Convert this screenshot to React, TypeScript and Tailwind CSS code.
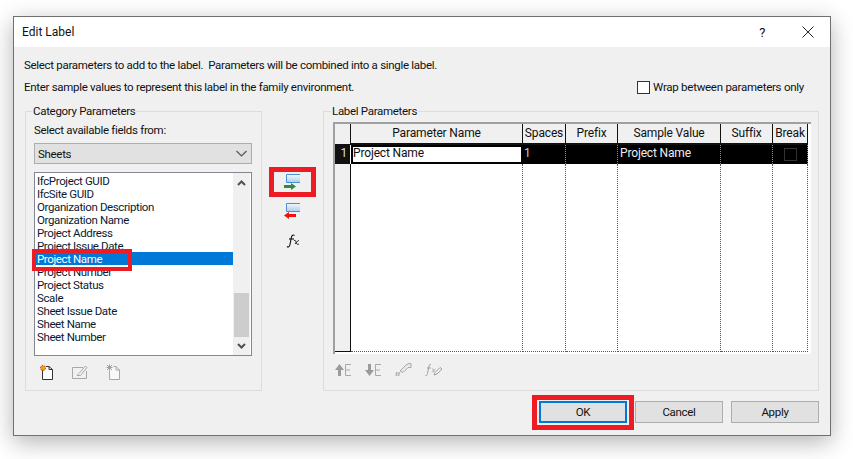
import React from "react";

const fields = [
  "IfcProject GUID",
  "IfcSite GUID",
  "Organization Description",
  "Organization Name",
  "Project Address",
  "Project Issue Date",
  "Project Name",
  "Project Number",
  "Project Status",
  "Scale",
  "Sheet Issue Date",
  "Sheet Name",
  "Sheet Number",
];

const headers = ["Parameter Name", "Spaces", "Prefix", "Sample Value", "Suffix", "Break"];

function ArrowIcon({ color, back }: { color: string; back?: boolean }) {
  return (
    <svg width="20" height="16" viewBox="0 0 20 16" className="block">
      <defs>
        <linearGradient id={`bar-${color}`} x1="0" y1="0" x2="0" y2="1">
          <stop offset="0" stopColor="#f4f9fd" />
          <stop offset="1" stopColor="#a9cdee" />
        </linearGradient>
      </defs>
      <path d="M17 .5H3.500v8H17" fill={`url(#bar-${color})`} stroke="#4a90d0" />
      {back ? (
        <path d="M13 11H6V9l-5 3.500 5 3.500v-2h7z" fill={color} />
      ) : (
        <path d="M1 11h7V9l5 3.500-5 3.500v-2H1z" fill={color} />
      )}
    </svg>
  );
}

function FxIcon() {
  return (
    <svg width="14" height="14" viewBox="0 0 14 14" fill="none" stroke="#111" strokeWidth="1.100" className="block">
      <path d="M8.500 1.500C7 .5 6 1.200 5.500 3L4 10.500C3.500 13 2 13.500 1 12.500" />
      <path d="M3 5h5" />
      <path d="M8 6.500c1.500-.5 2 .5 2.500 3 .5 1 1 1 2.500.5M13 6.500c-1 0-2 1-4 3.500" strokeWidth=".9" />
    </svg>
  );
}

function NewIcon() {
  return (
    <svg width="16" height="17" viewBox="0 0 16 17" fill="none">
      <path d="M3.500 5.500V15.500H13.500V5.500L10 2.500H7" stroke="#333" fill="#fff" />
      <path d="M10 2.500V5.500H13.500" stroke="#333" />
      <circle cx="4" cy="4" r="2.500" fill="#f5a400" stroke="#e03010" strokeDasharray="1.500 1" />
    </svg>
  );
}

function EditIcon() {
  return (
    <svg width="17" height="15" viewBox="0 0 17 15" fill="none">
      <path d="M14.500 6V13.500H.5V2.500H11" stroke="#a8a8a8" />
      <path d="M5 10.500h3.500L15 2.500 13.500 1 7 8.500z" stroke="#a8a8a8" fill="#f4f4f4" />
    </svg>
  );
}

function DeleteIcon() {
  return (
    <svg width="16" height="17" viewBox="0 0 16 17" fill="none">
      <path d="M3.500 6.500V15.500H13.500V6L10 2.500H7.500" stroke="#a8a8a8" fill="#f8f8f8" />
      <path d="M10 2.500V6H13.500" stroke="#a8a8a8" />
      <path d="M1 1l5 5M6 1L1 6M3.500 .5v6M.5 3.500h6" stroke="#a0a0a0" />
    </svg>
  );
}

function MoveIcon({ down }: { down?: boolean }) {
  return (
    <svg width="17" height="14" viewBox="0 0 17 14" fill="none">
      {down ? <path d="M3 1h3v6h3l-4.500 6L0 7h3z" fill="#9a9a9a" /> : <path d="M4.500 1L9 7H6v6H3V7H0z" fill="#9a9a9a" />}
      <path d="M16 1.500H10.500V12.500H16M10.500 7H15" stroke="#a8a8a8" />
    </svg>
  );
}

function RenameIcon() {
  return (
    <svg width="17" height="15" viewBox="0 0 17 15" fill="none" stroke="#a8a8a8">
      <path d="M1 14l1-4M3.500 14l1-4M.5 11h4.500M.5 13h4" strokeWidth=".8" />
      <path d="M5 9l6-6 3-1.500h2v4h-3l-5 5z" fill="#eaeaea" />
    </svg>
  );
}

function FxEditIcon() {
  return (
    <svg width="18" height="14" viewBox="0 0 18 14" fill="none" stroke="#a0a0a0">
      <path d="M6 1.500C5 1 4.500 1.500 4 3L2.500 10.500C2 12.500 1.500 13 .5 12.500M2 5h4" />
      <path d="M7 6c1.500-.5 1.500 1 2 3M10.500 6C9 7 8 8 7 9.500" strokeWidth=".8" />
      <path d="M9 12l1-2.500 5-5 2 1.500-5 5z" fill="#f2f2f2" />
    </svg>
  );
}

function Chevron() {
  return (
    <svg width="11" height="7" viewBox="0 0 11 7" fill="none" stroke="#555" strokeWidth="1.200">
      <path d="M.5 1L5.500 6l5-5" />
    </svg>
  );
}

function ScrollArrow({ down }: { down?: boolean }) {
  return (
    <svg width="9" height="6" viewBox="0 0 9 6" fill="none" stroke="#505050" strokeWidth="2">
      <path d={down ? "M1 1l3.500 3.500L8 1" : "M1 5l3.500-3.500L8 5"} />
    </svg>
  );
}

function Button({ label, active }: { label: string; active?: boolean }) {
  return (
    <button
      className={
        active
          ? "h-[22px] w-[88px] border-2 border-[#0078d7] bg-[#e1e1e1] text-center text-[#111]"
          : "h-[22px] w-[88px] border border-[#adadad] bg-[#e1e1e1] text-center text-[#111]"
      }
    >
      {label}
    </button>
  );
}

export default function App() {
  return (
    <div className="h-[459px] w-[853px] overflow-hidden bg-white pl-[13px] pt-[16px] font-['Roboto',sans-serif] text-[11.5px] leading-[13px] tracking-[-0.3px] text-[#111]">
      <div className="relative h-[420px] w-[818px] border border-[#707070] bg-[#f0f0f0] shadow-[0_6px_22px_rgba(0,0,0,0.3)]">
        {/* title bar */}
        <div className="flex h-[30px] items-center bg-white pl-[8px] pr-[16px]">
          <span className="flex-1 text-[12px] tracking-normal">Edit Label</span>
          <span className="mr-[37px] text-[13px]">?</span>
          <svg width="12" height="12" viewBox="0 0 12 12" stroke="#222" fill="none">
            <path d="M.5 .5l11 11M11.500 .5l-11 11" />
          </svg>
        </div>

        <div className="pl-[10px] pr-[26px] pt-[7px]">
          <div className="flex h-[22px] items-center">
            Select parameters to add to the label.&nbsp; Parameters will be combined into a single label.
          </div>
          <div className="flex h-[22px] items-center justify-between">
            <span>Enter sample values to represent this label in the family environment.</span>
            <label className="flex items-center gap-[3px] tracking-[-0.26px]">
              <span className="h-[13px] w-[13px] border border-[#333] bg-white" />
              Wrap between parameters only
            </label>
          </div>
        </div>

        <div className="flex pl-[11px] pt-[5px]">
          {/* left group */}
          <fieldset className="h-[288px] w-[237px] border border-[#dcdcdc] pl-[8px]">
            <legend className="ml-[-2px] px-[1px] leading-[16px]">Category Parameters</legend>
            <div className="mt-[3px] h-[16px] leading-[16px]">Select available fields from:</div>
            <div className="mt-[5px] flex h-[21px] w-[218px] items-center justify-between border border-[#adadad] bg-[#e1e1e1] pl-[3px] pr-[4px]">
              <span className="pt-[1px]">Sheets</span>
              <Chevron />
            </div>
            <div className="mt-[8px] flex h-[184px] w-[218px] border border-[#828790] bg-white">
              <ul className="w-[198px] pt-[1px] tracking-[-0.38px]">
                {fields.map((f) => (
                  <li
                    key={f}
                    className={
                      f === "Project Name"
                        ? "h-[13px] bg-[#0078d7] pl-[2px] leading-[15px] text-white"
                        : "h-[13px] pl-[2px] leading-[15px] text-[#0a1a33]"
                    }
                  >
                    {f}
                  </li>
                ))}
              </ul>
              <div className="flex w-[17px] flex-col items-center bg-[#f0f0f0]">
                <div className="flex h-[17px] items-center justify-center pt-[3px]">
                  <ScrollArrow />
                </div>
                <div className="mt-[103px] h-[44px] w-[15px] bg-[#cdcdcd]" />
                <div className="flex flex-1 items-center justify-center pb-[1px]">
                  <ScrollArrow down />
                </div>
              </div>
            </div>
            <div className="mt-[8px] flex items-center gap-[17px] pl-[5px]">
              <NewIcon />
              <EditIcon />
              <DeleteIcon />
            </div>
          </fieldset>

          {/* add / remove buttons */}
          <div className="flex w-[61px] flex-col items-center pl-[1px] pt-[71px]">
            <ArrowIcon color="#2e8b45" />
            <div className="mt-[13px]">
              <ArrowIcon color="#f01010" back />
            </div>
            <div className="mt-[15px]">
              <FxIcon />
            </div>
          </div>

          {/* right group */}
          <fieldset className="h-[288px] w-[496px] border border-[#dcdcdc] pl-[9px]">
            <legend className="ml-[-2px] px-[1px] leading-[16px]">Label Parameters</legend>
            <div className="mt-[3px] grid h-[232px] w-[478px] grid-cols-[16px_172px_43px_52px_103px_52px_35px] grid-rows-[21px_19px_1fr] border-l-2 border-t-2 border-l-[#a0a0a0] border-t-[#a0a0a0] bg-white pr-[3px] pb-[2px] text-[12px] tracking-[-0.15px]">
              <div className="border-b border-r border-b-[#111] border-r-[#111] bg-[#f0f0f0]" />
              {headers.map((h) => (
                <div key={h} className="flex items-center justify-center border-b-2 border-r border-b-[#111] border-r-[#111] bg-[#f0f0f0]">
                  {h}
                </div>
              ))}

              <div className="flex items-center justify-end border-r border-r-white bg-[#111] pb-[3px] pr-[3px] text-[#ddd]">1</div>
              <div className="flex items-center border-2 border-black bg-white pb-[2px]">Project Name</div>
              <div className="flex items-center border-r border-dotted border-r-[#888] bg-black pb-[3px] pl-[1px] text-[#ccc]">1</div>
              <div className="border-r border-dotted border-r-[#888] bg-black" />
              <div className="flex items-center border-r border-dotted border-r-[#888] bg-black pb-[3px] pl-[2px] text-[#eee]">Project Name</div>
              <div className="border-r border-dotted border-r-[#888] bg-black" />
              <div className="flex items-center justify-center border-r border-dotted border-r-[#888] bg-black">
                <span className="h-[13px] w-[13px] border border-[#333]" />
              </div>

              <div className="border-b border-r border-b-[#111] border-r-[#111] bg-[#f0f0f0]" />
              <div className="border-b border-r border-dotted border-[#555]" />
              <div className="border-b border-r border-dotted border-[#555]" />
              <div className="border-b border-r border-dotted border-[#555]" />
              <div className="border-b border-r border-dotted border-[#555]" />
              <div className="border-b border-r border-dotted border-[#555]" />
              <div className="border-b border-r border-dotted border-[#555]" />
            </div>
            <div className="mt-[8px] flex items-center gap-[13px] pl-[2px]">
              <MoveIcon />
              <MoveIcon down />
              <RenameIcon />
              <FxEditIcon />
            </div>
          </fieldset>
        </div>

        {/* footer buttons */}
        <div className="flex justify-end gap-[8px] pr-[11px] pt-[10px]">
          <Button label="OK" active />
          <Button label="Cancel" />
          <Button label="Apply" />
        </div>

        {/* red callouts */}
        <div className="absolute left-[255px] top-[150px] h-[30px] w-[47px] border-[5px] border-[#ed1c24]" />
        <div className="absolute left-[18px] top-[232px] h-[22px] w-[100px] border-[4px] border-[#ed1c24]" />
        <div className="absolute left-[518px] top-[378px] h-[35px] w-[102px] border-[5px] border-[#ed1c24]" />
      </div>
    </div>
  );
}
